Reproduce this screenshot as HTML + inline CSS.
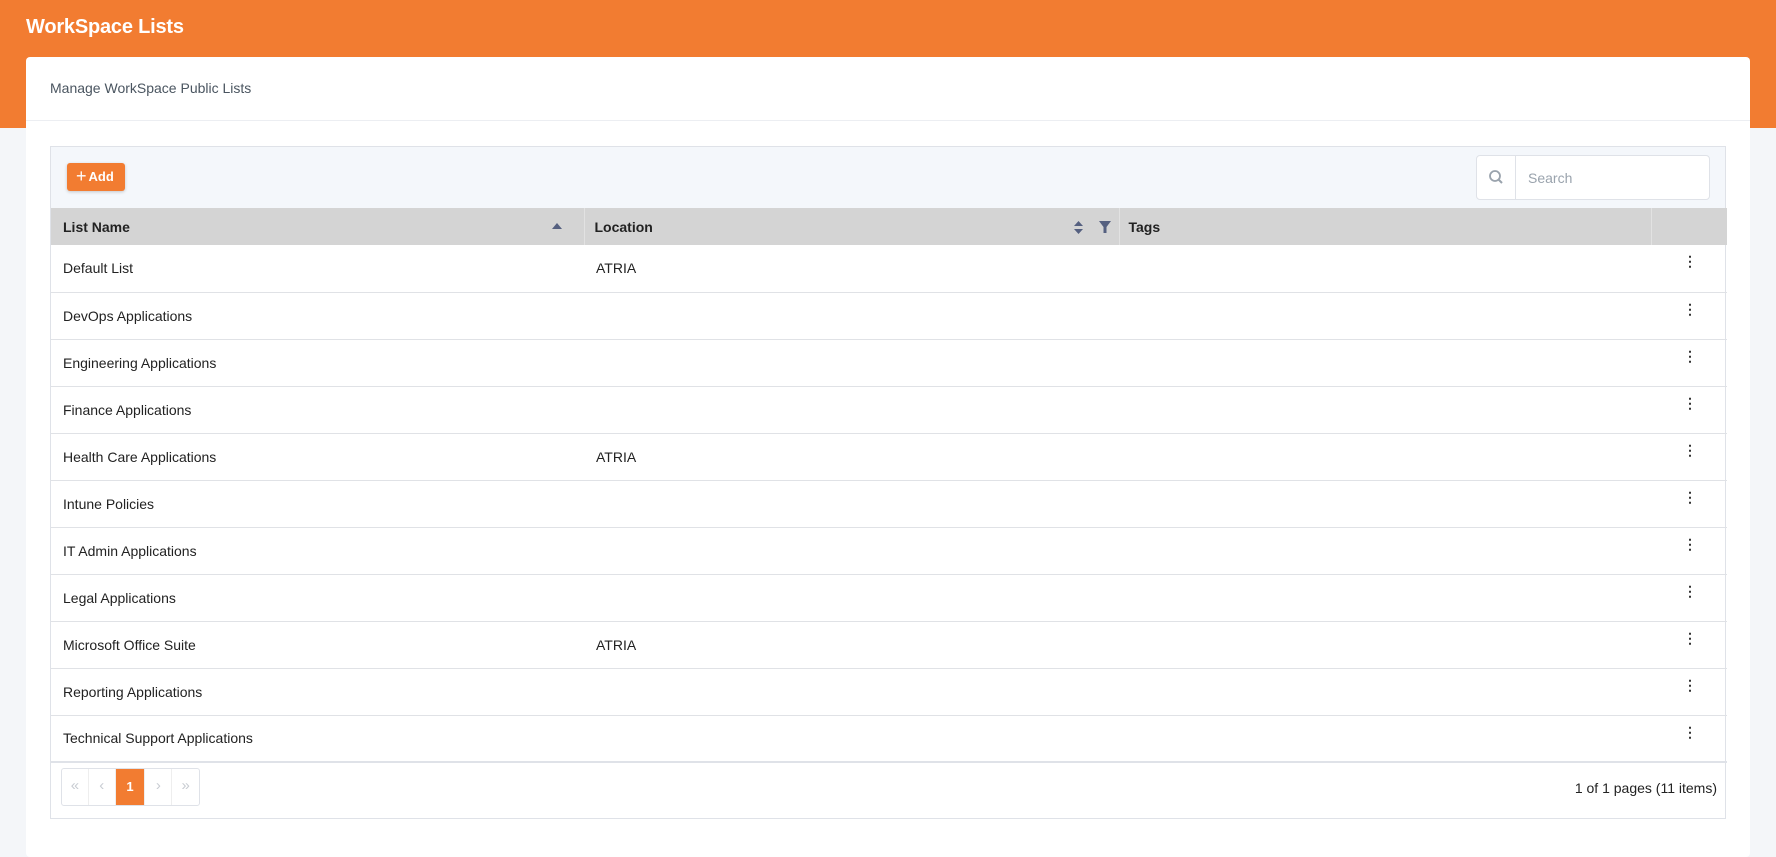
<!DOCTYPE html>
<html><head><meta charset="utf-8">
<style>
*{box-sizing:border-box;margin:0;padding:0}
body{width:1776px;height:834px;overflow:hidden;background:#f4f6f9;font-family:"Liberation Sans",sans-serif;position:relative}
.hdr{position:absolute;left:0;top:0;width:1776px;height:128px;background:#f27c31}
.title{position:absolute;left:26px;top:16px;color:#fff;font-size:20px;font-weight:bold;letter-spacing:-0.2px}
.card{position:absolute;left:26px;top:57px;width:1724px;height:800px;background:#fff;border-radius:4px}
.sub{position:absolute;left:0;top:0;width:100%;height:64px;border-bottom:1px solid #eceef2;padding:23px 0 0 24px;font-size:14px;color:#4a5560}
.grid{position:absolute;left:50px;top:146px;width:1676px;height:673px;border:1px solid #dfe2e8;background:#fff}
.tb{height:61px;background:#f4f7fb;position:relative}
.add{position:absolute;left:16px;top:16px;width:58px;height:28px;background:#f27c31;color:#fff;border-radius:3px;font-size:13px;font-weight:bold;padding:6px 0 0 9px;box-shadow:0 1px 3px rgba(0,0,0,.2)}
.add span{font-size:18px;font-weight:normal;position:relative;top:1px;margin-right:2px;line-height:10px}
.search{position:absolute;left:1425px;top:8px;width:234px;height:45px;border:1px solid #dfe2e8;border-radius:4px;background:#fff}
.search .ic{position:absolute;left:0;top:0;width:39px;height:43px;border-right:1px solid #dfe2e8}
.search .ph{position:absolute;left:51px;top:14px;font-size:14px;color:#9aa3ad}
table{border-collapse:collapse;width:1676px;table-layout:fixed}
th{height:37px;background:#d4d4d4;text-align:left;font-size:14px;color:#222;padding:0 0 0 12px;border-right:1px solid #e2e2e2;position:relative}
td{height:47px;border-bottom:1px solid #e0e2e6;font-size:14px;color:#222;padding:0 0 0 12px}
td.k{text-align:center;vertical-align:top;padding:8px 0 0 2px;font-weight:bold;font-size:14px;color:#333}
.pager{position:absolute;left:10px;bottom:12px;height:38px;width:139px;border:1px solid #dfe2e8;border-radius:3px;display:flex}
.pager div{width:27px;color:#c8ccd2;font-size:15px;text-align:center;padding-top:8px;border-right:1px solid #eee}
.pager .on{background:#f27c31;color:#fff;font-size:13px;font-weight:bold;padding-top:10px;width:30px}
.info{position:absolute;right:8px;bottom:22px;font-size:14px;color:#222}
</style></head><body>
<div class="hdr"><div class="title">WorkSpace Lists</div></div>
<div class="card"><div class="sub">Manage WorkSpace Public Lists</div></div>
<div class="grid">
<div class="tb">
<div class="add"><span>+</span>Add</div>
<div class="search"><div class="ic"><svg width="39" height="43"><circle cx="18" cy="20" r="5" fill="none" stroke="#9aa3ad" stroke-width="1.8"/><line x1="21.5" y1="23.5" x2="25" y2="27" stroke="#9aa3ad" stroke-width="2"/></svg></div><div class="ph">Search</div></div>
</div>
<table>
<colgroup><col style="width:533px"><col style="width:535px"><col style="width:532px"><col style="width:76px"></colgroup>
<tr><th>List Name<svg style="position:absolute;right:22px;top:15px" width="10" height="7"><path d="M0 6L5 0L10 6Z" fill="#556080"/></svg></th>
<th style="padding-left:10px">Location<svg style="position:absolute;right:36px;top:13px" width="9" height="13"><path d="M0 5L4.5 0L9 5Z M0 8L4.5 13L9 8Z" fill="#556080"/></svg><svg style="position:absolute;right:8px;top:13px" width="12" height="12"><path d="M0 0H12L7.5 6V12H4.5V6Z" fill="#556080"/></svg></th>
<th style="padding-left:9px">Tags</th><th style="border-right:none"></th></tr>
<tr><td>Default List</td><td>ATRIA</td><td></td><td class="k">⋮</td></tr>
<tr><td>DevOps Applications</td><td></td><td></td><td class="k">⋮</td></tr>
<tr><td>Engineering Applications</td><td></td><td></td><td class="k">⋮</td></tr>
<tr><td>Finance Applications</td><td></td><td></td><td class="k">⋮</td></tr>
<tr><td>Health Care Applications</td><td>ATRIA</td><td></td><td class="k">⋮</td></tr>
<tr><td>Intune Policies</td><td></td><td></td><td class="k">⋮</td></tr>
<tr><td>IT Admin Applications</td><td></td><td></td><td class="k">⋮</td></tr>
<tr><td>Legal Applications</td><td></td><td></td><td class="k">⋮</td></tr>
<tr><td>Microsoft Office Suite</td><td>ATRIA</td><td></td><td class="k">⋮</td></tr>
<tr><td>Reporting Applications</td><td></td><td></td><td class="k">⋮</td></tr>
<tr><td style="border-bottom:2px solid #dfe2e8">Technical Support Applications</td><td style="border-bottom:2px solid #dfe2e8"></td><td style="border-bottom:2px solid #dfe2e8"></td><td class="k" style="border-bottom:2px solid #dfe2e8">⋮</td></tr>
</table>
<div class="pager"><div>«</div><div>‹</div><div class="on">1</div><div>›</div><div style="border-right:none">»</div></div>
<div class="info">1 of 1 pages (11 items)</div>
</div>
</body></html>
